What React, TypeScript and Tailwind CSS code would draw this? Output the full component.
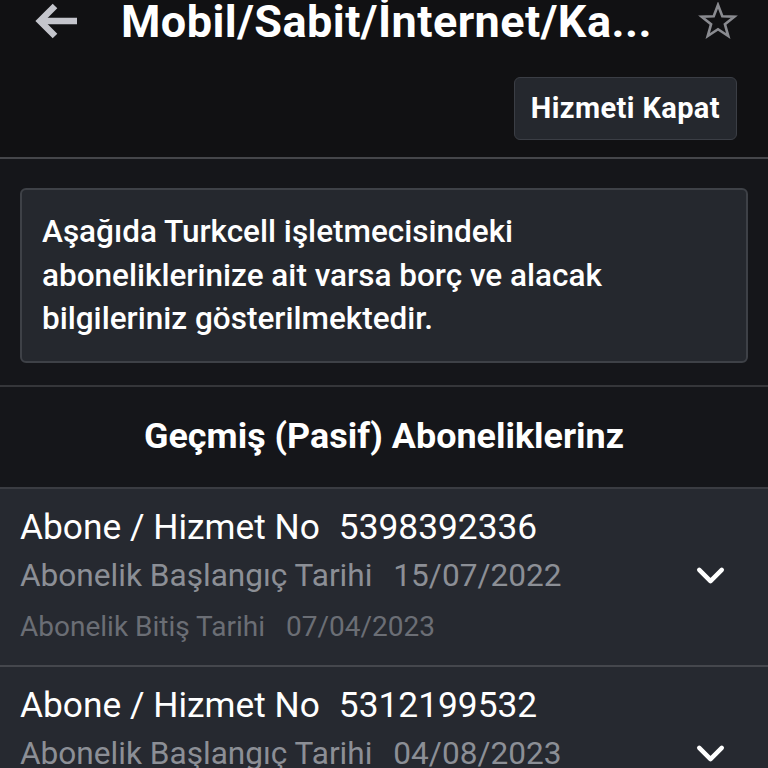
import { ChevronDown } from 'lucide-react';

const subscriptions = [
  { no: '5398392336', start: '15/07/2022', end: '07/04/2023' },
  { no: '5312199532', start: '04/08/2023', end: '12/01/2024' },
];

function BackArrow() {
  return (
    <svg width="46" height="40" viewBox="0 0 46 40" fill="none" stroke="#c4c5cc" strokeWidth="6.5" strokeLinecap="butt">
      <path d="M8 20 H44" />
      <path d="M22 5 L7 20 L22 35" strokeLinejoin="miter" />
    </svg>
  );
}

function StarOutline() {
  return (
    <svg width="40" height="38" viewBox="0 0 24 23" fill="none" stroke="#8a8b90" strokeWidth="1.6" strokeLinejoin="miter">
      <path d="M12 1.8 L14.6 8.6 L21.9 8.9 L16.2 13.5 L18.2 20.6 L12 16.5 L5.8 20.6 L7.8 13.5 L2.1 8.9 L9.4 8.6 Z" />
    </svg>
  );
}

export default function App() {
  return (
    <div className="h-[768px] overflow-hidden bg-[#15161a] text-white" style={{ fontFamily: 'Roboto, "Noto Sans", sans-serif' }}>
      <div className="bg-[#111113]">
        <div className="flex items-center h-[46px] -mt-[2px]">
          <div className="w-[121px] pl-[33px] flex items-center">
            <BackArrow />
          </div>
          <h1 className="flex-1 text-[45px] font-bold leading-none tracking-[0.45px] whitespace-nowrap">Mobil/Sabit/İnternet/Ka...</h1>
          <div className="pr-[30px] flex items-center">
            <StarOutline />
          </div>
        </div>
        <div className="flex justify-end pt-[33px] pb-[17px] pr-[31px]">
          <button className="h-[63px] px-[16px] rounded-[6px] bg-[#25282e] border border-[#3b3e45] text-[29px] font-bold tracking-[0.4px]">
            Hizmeti Kapat
          </button>
        </div>
      </div>
      <div className="h-[2px] bg-[#45464a]" />

      <div className="px-[20px] pt-[29px] pb-[22px]">
        <div className="rounded-[6px] bg-[#25282e] border-2 border-[#3e4147] px-[20px] pt-[20px] pb-[20px] text-[31.5px] font-medium leading-[43.5px]">
          Aşağıda Turkcell işletmecisindeki<br />
          aboneliklerinize ait varsa borç ve alacak<br />
          bilgileriniz gösterilmektedir.
        </div>
      </div>
      <div className="h-[2px] bg-[#35363a]" />

      <div className="h-[100px] flex items-center justify-center">
        <h2 className="text-[35.9px] font-bold">Geçmiş (Pasif) Aboneliklerinz</h2>
      </div>
      <div className="h-[2px] bg-[#3a3c42]" />

      <div className="bg-[#262930]">
        {subscriptions.map((s, i) => (
          <div key={s.no}>
            {i > 0 && <div className="h-[2px] bg-[#45474d]" />}
            <div className="flex items-center pl-[20px] pr-[35px] pt-[18px] pb-[22px]">
              <div className="flex-1">
                <div className="text-[35.3px] leading-[40px]">
                  Abone / Hizmet No<span className="ml-[19px]">{s.no}</span>
                </div>
                <div className="text-[31.6px] leading-[37px] mt-[10px] text-[#8c8f96]">
                  Abonelik Başlangıç Tarihi<span className="ml-[21px]">{s.start}</span>
                </div>
                <div className="text-[28px] leading-[32px] mt-[17px] text-[#6b6e75]">
                  Abonelik Bitiş Tarihi<span className="ml-[21px]">{s.end}</span>
                </div>
              </div>
              <ChevronDown className="w-[45px] h-[45px] text-white mt-[1px]" strokeWidth={2.4} />
            </div>
          </div>
        ))}
      </div>
    </div>
  );
}
